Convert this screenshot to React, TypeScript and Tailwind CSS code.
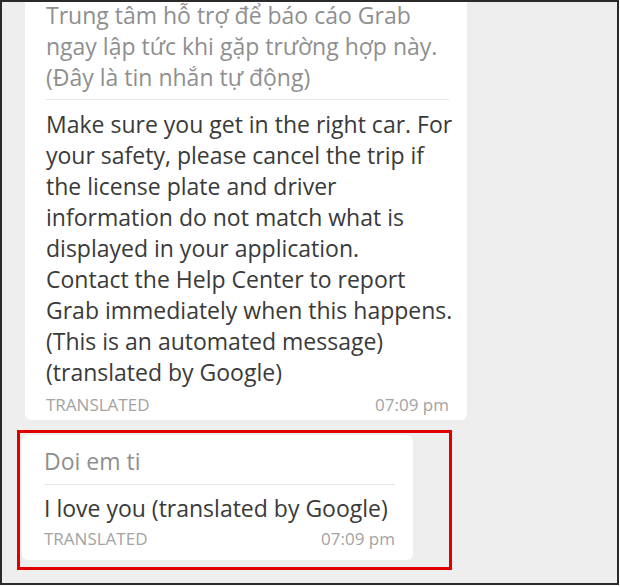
const font = { fontFamily: '"Open Sans", "Noto Sans", sans-serif' }

function MessageFooter({ time, className }: { time: string; className: string }) {
  return (
    <div className={`flex items-center justify-between text-[17px] leading-[20px] text-[#a3a3a3] ${className}`}>
      <span>TRANSLATED</span>
      <span>{time}</span>
    </div>
  )
}

function Lines({ lines, className }: { lines: string[]; className: string }) {
  return (
    <div className={`whitespace-nowrap ${className}`}>
      {lines.map((line) => (
        <div key={line}>{line}</div>
      ))}
    </div>
  )
}

export default function App() {
  return (
    <div className="h-[587px] w-[620px] bg-white" style={font}>
      <div className="h-[585px] w-[619px] overflow-hidden border-2 border-[#2a2a2a] bg-[#eeeeee]">
        {/* automated safety message, top cut off */}
        <div className="ml-[23px] w-[442px] rounded-b-md bg-white pb-[5px] pl-[21px] pr-[18px] text-[23px] leading-[31px]">
          <Lines
            className="-mt-[2px] text-[#8f8f8f]"
            lines={[
              "Trung tâm hỗ trợ để báo cáo Grab",
              "ngay lập tức khi gặp trường hợp này.",
              "(Đây là tin nhắn tự động)",
            ]}
          />
          <div className="mb-[9px] mt-[6px] h-px bg-[#e6e6e6]" />
          <Lines
            className="text-[#3a3a3a]"
            lines={[
              "Make sure you get in the right car. For",
              "your safety, please cancel the trip if",
              "the license plate and driver",
              "information do not match what is",
              "displayed in your application.",
              "Contact the Help Center to report",
              "Grab immediately when this happens.",
              "(This is an automated message)",
              "(translated by Google)",
            ]}
          />
          <MessageFooter time="07:09 pm" className="mt-[7px]" />
        </div>

        <div className="ml-[15px] mt-[10px] h-[140px] w-[435px] border-[3px] border-[#e00000] pl-[2px] pt-[2px]">
          <div className="w-[391px] rounded-md bg-white pb-[11px] pl-[22px] pr-[18px] pt-[11px] text-[23px] leading-[31px]">
            <Lines className="text-[#8f8f8f]" lines={["Doi em ti"]} />
            <div className="mb-[8px] mt-[7px] h-px bg-[#e6e6e6]" />
            <Lines className="text-[#3a3a3a]" lines={["I love you (translated by Google)"]} />
            <MessageFooter time="07:09 pm" className="mt-[5px]" />
          </div>
        </div>
      </div>
    </div>
  )
}
